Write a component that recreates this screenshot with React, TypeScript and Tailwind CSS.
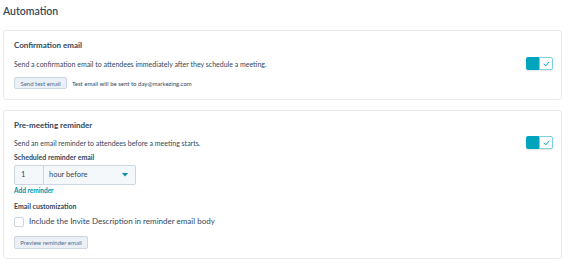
import React from "react";

function Toggle() {
  return (
    <div className="flex h-[13px] w-[27px] rounded-[2px] shadow-[0_1px_2px_rgba(0,0,0,0.12)]">
      <div className="w-[13px] h-full bg-[#00a4bd] rounded-l-[2px]" />
      <div className="flex-1 h-full border border-[#7fd1de] bg-white rounded-r-[2px] flex items-center justify-center">
        <svg width="7" height="6" viewBox="0 0 7 6" fill="none">
          <path d="M1 3.2 L2.8 4.8 L6 1.2" stroke="#00a4bd" strokeWidth="1" strokeLinecap="round" strokeLinejoin="round" />
        </svg>
      </div>
    </div>
  );
}

export default function App() {
  return (
    <div className="w-[575px] h-[274px] bg-white text-[#33475b] pl-[3px] pr-[13px]" style={{ fontFamily: "Lato, 'Noto Sans', sans-serif" }}>
      <div className="pt-[4px] text-[10.5px] font-semibold leading-[15px] text-[#33475b]">Automation</div>

      <div className="mt-[11px] border border-[#e7ebee] rounded-[3px] pl-[10px] pr-[8px] pt-[9px] pb-[10px]">
        <div className="text-[8px] font-bold leading-[11px]">Confirmation email</div>
        <div className="mt-[6px] flex items-center justify-between">
          <div className="text-[7px] leading-[10px]">Send a confirmation email to attendees immediately after they schedule a meeting.</div>
          <Toggle />
        </div>
        <div className="mt-[7px] flex items-center gap-[5px]">
          <div className="h-[12px] w-[53px] rounded-[2px] border border-[#cbd6e2] bg-[#eaf0f6] text-[#506e91] text-[6px] flex items-center justify-center">Send test email</div>
          <div className="text-[6px]">Test email will be sent to day@markezing.com</div>
        </div>
      </div>

      <div className="mt-[10px] border border-[#e7ebee] rounded-[3px] pl-[10px] pr-[8px] pt-[9px] pb-[9px]">
        <div className="text-[8px] font-bold leading-[11px]">Pre-meeting reminder</div>
        <div className="mt-[5px] flex items-center justify-between">
          <div className="text-[7px] leading-[10px]">Send an email reminder to attendees before a meeting starts.</div>
          <Toggle />
        </div>
        <div className="mt-[3px] text-[7px] font-bold leading-[10px]">Scheduled reminder email</div>
        <div className="mt-[3px] flex h-[20px] w-[122px] border border-[#cbd6e2] rounded-[2px] bg-[#f5f8fa]">
          <div className="w-[29px] border-r border-[#cbd6e2] text-[7.5px] flex items-center pl-[6px]">1</div>
          <div className="flex-1 flex items-center justify-between pl-[5px] pr-[7px] text-[7.5px]">
            <span>hour before</span>
            <svg width="6" height="4" viewBox="0 0 6 4"><path d="M0 0 L6 0 L3 3.5 Z" fill="#0091ae" /></svg>
          </div>
        </div>
        <div className="mt-[1px] text-[6.5px] font-bold text-[#0091ae] leading-[9px]">Add reminder</div>
        <div className="mt-[6px] text-[7px] font-bold leading-[10px]">Email customization</div>
        <div className="mt-[5px] flex items-center gap-[5px]">
          <div className="w-[10px] h-[10px] border border-[#cbd6e2] rounded-[2px] bg-white" />
          <div className="text-[8px] leading-[11px]">Include the Invite Description in reminder email body</div>
        </div>
        <div className="mt-[9px] h-[13px] w-[74px] rounded-[2px] border border-[#cbd6e2] bg-[#eaf0f6] text-[#506e91] text-[6px] flex items-center justify-center">Preview reminder email</div>
      </div>
    </div>
  );
}
